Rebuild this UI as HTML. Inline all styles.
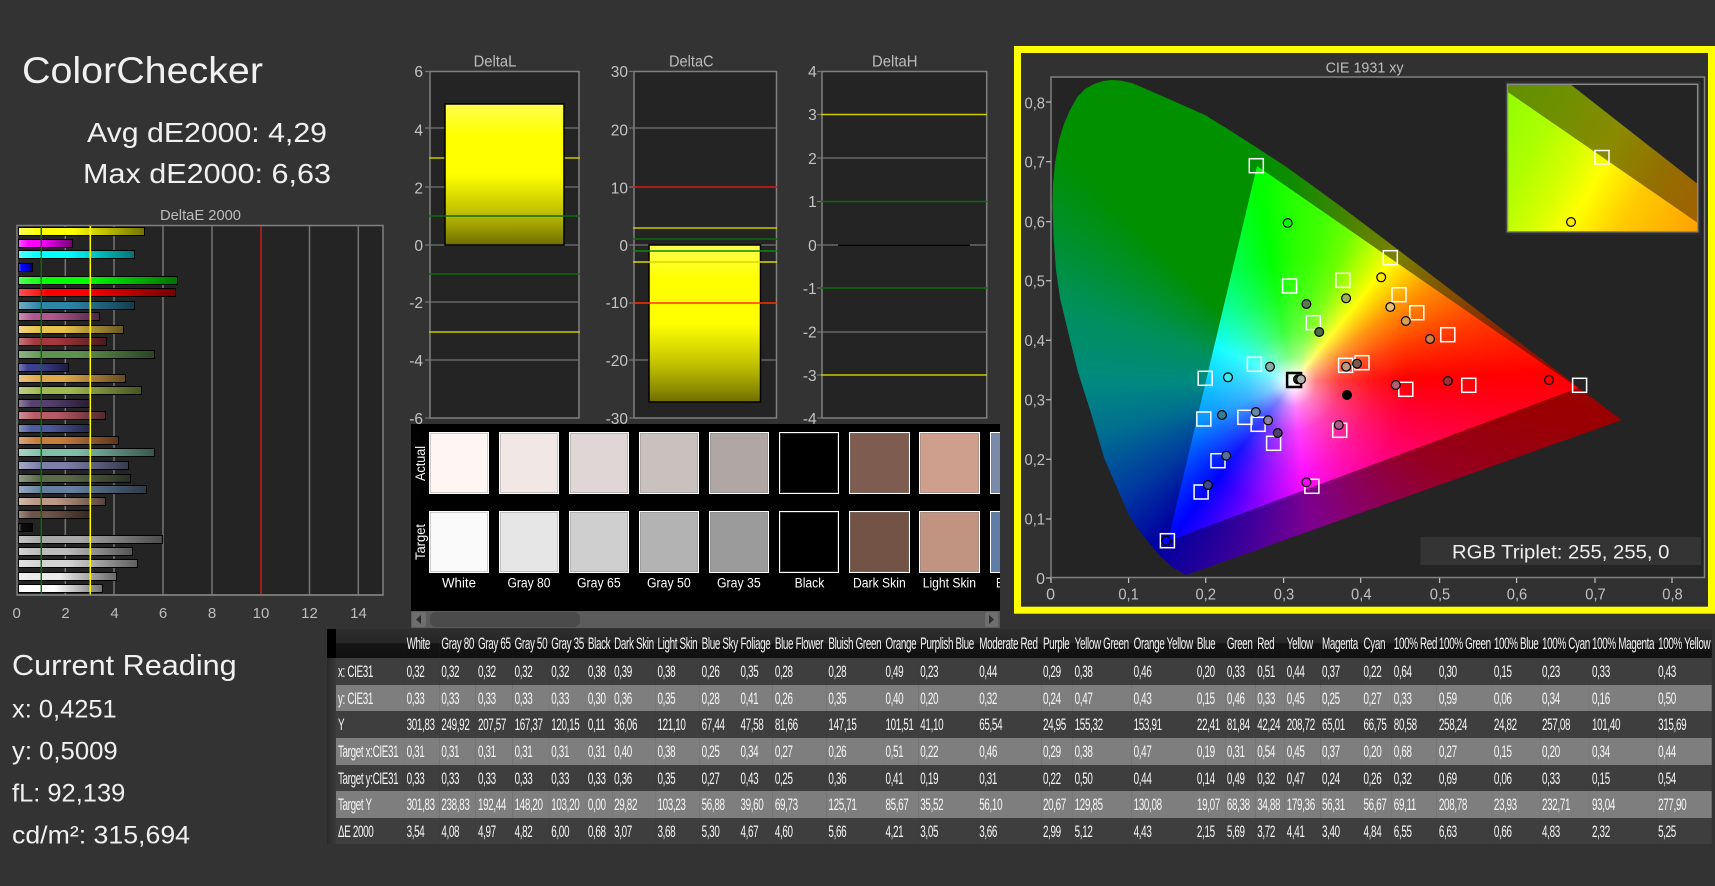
<!DOCTYPE html>
<html lang="en">
<head>
<meta charset="utf-8">
<title>ColorChecker</title>
<style>
html,body{margin:0;padding:0;background:#333;}
body{width:1715px;height:886px;overflow:hidden;position:relative;font-family:"Liberation Sans",sans-serif;}
svg.layer{position:absolute;left:0;top:0;width:1715px;height:886px;}
svg text{font-family:"Liberation Sans",sans-serif;}
.b{position:absolute;left:18px;height:9px;box-sizing:border-box;border:1px solid #000;}
.b i{display:block;width:100%;height:100%;background:linear-gradient(90deg,rgba(255,255,255,.32),rgba(255,255,255,0) 18%,rgba(0,0,0,0) 42%,rgba(0,0,0,.55));}
.full{position:absolute;left:0;top:0;width:1715px;height:886px;}
#panel{position:absolute;left:411px;top:424px;width:589px;height:187px;background:#000;overflow:hidden;}
.sw{position:absolute;width:60px;height:62px;box-sizing:border-box;border:1px solid #fff;box-shadow:inset 0 0 0 1px rgba(120,120,120,.35);}
#sb{position:absolute;left:411px;top:611px;width:589px;height:17px;background:#5c5c5c;}
#sb div{position:absolute;}
#tw{position:absolute;left:336px;top:629px;width:2372px;transform:scaleX(.58);transform-origin:0 0;}
table{border-collapse:collapse;table-layout:fixed;width:2372px;font:17px/1 "Liberation Sans",sans-serif;letter-spacing:-.6px;color:#f6f6f6;}
td{padding:0 0 0 3.4px;white-space:nowrap;vertical-align:middle;}
tr.h{height:29px;background:linear-gradient(#2e2e2e 0,#262626 48%,#151515 50%,#101010 100%);}
tr.d{background:#3e3e3e;}
tr.l{background:#7e7e7e;}
#strip{position:absolute;left:327px;top:658px;width:9px;height:186px;background:linear-gradient(90deg,#292929,#3a3a3a);}
#strip0{position:absolute;left:327px;top:629px;width:9px;height:29px;background:#000;}
</style>
</head>
<body>

<!-- LAYER 1 -->
<svg class="layer" viewBox="0 0 1715 886" xmlns="http://www.w3.org/2000/svg">
<defs>
<linearGradient id="gb" x1="0" y1="0" x2="0" y2="1">
<stop offset="0" stop-color="#ffff50"/><stop offset=".22" stop-color="#ffff00"/><stop offset=".5" stop-color="#ffff00"/><stop offset=".75" stop-color="#c4c400"/><stop offset=".92" stop-color="#8c8c00"/><stop offset="1" stop-color="#6c6c00"/>
</linearGradient>
</defs>

<!-- DeltaE plot -->
<rect x="17" y="225.5" width="366" height="369.5" fill="#242424" stroke="#808080" stroke-width="1.5"/>
<g stroke="#757575" stroke-width="1.5">
<line x1="65.3" y1="226" x2="65.3" y2="595"/>
<line x1="114" y1="226" x2="114" y2="595"/>
<line x1="163" y1="226" x2="163" y2="595"/>
<line x1="212" y1="226" x2="212" y2="595"/>
<line x1="309.5" y1="226" x2="309.5" y2="595"/>
<line x1="358.3" y1="226" x2="358.3" y2="595"/>
</g>
<line x1="261" y1="226" x2="261" y2="595" stroke="#c81c1c" stroke-width="1.5"/>

<!-- DeltaL -->
<rect x="430" y="71.5" width="149" height="346.5" fill="#242424" stroke="#808080" stroke-width="1.5"/>
<g stroke="#757575" stroke-width="1.2">
<line x1="425" y1="128" x2="579" y2="128"/><line x1="425" y1="187" x2="579" y2="187"/><line x1="425" y1="245" x2="579" y2="245"/><line x1="425" y1="302" x2="579" y2="302"/><line x1="425" y1="360" x2="579" y2="360"/>
<line x1="425" y1="71.5" x2="430" y2="71.5"/><line x1="425" y1="418" x2="430" y2="418"/>
</g>
<line x1="429" y1="158" x2="580" y2="158" stroke="#c8c800" stroke-width="1.5"/>
<line x1="429" y1="332" x2="580" y2="332" stroke="#c8c800" stroke-width="1.5"/>
<rect x="445" y="104" width="119" height="141" fill="url(#gb)" stroke="#000" stroke-width="1.5"/>
<line x1="429" y1="216" x2="580" y2="216" stroke="#0c6c0c" stroke-width="1.5"/>
<line x1="429" y1="274" x2="580" y2="274" stroke="#0c6c0c" stroke-width="1.5"/>

<!-- DeltaC -->
<rect x="634" y="71.5" width="142.5" height="346.5" fill="#242424" stroke="#808080" stroke-width="1.5"/>
<g stroke="#757575" stroke-width="1.2">
<line x1="629" y1="128" x2="776" y2="128"/><line x1="629" y1="245" x2="776" y2="245"/><line x1="629" y1="360" x2="776" y2="360"/>
<line x1="629" y1="71.5" x2="634" y2="71.5"/><line x1="629" y1="187" x2="634" y2="187"/><line x1="629" y1="303" x2="634" y2="303"/><line x1="629" y1="418" x2="634" y2="418"/>
</g>
<line x1="633" y1="187" x2="777" y2="187" stroke="#d01c1c" stroke-width="1.5"/>
<line x1="633" y1="228" x2="777" y2="228" stroke="#c8c800" stroke-width="1.5"/>
<line x1="633" y1="239" x2="777" y2="239" stroke="#0c6c0c" stroke-width="1.5"/>
<rect x="649" y="245" width="111.5" height="157" fill="url(#gb)" stroke="#000" stroke-width="1.5"/>
<line x1="633" y1="251" x2="777" y2="251" stroke="#0c8a0c" stroke-width="1.5"/>
<line x1="633" y1="262" x2="777" y2="262" stroke="#d8d800" stroke-width="1.5"/>
<line x1="633" y1="303" x2="777" y2="303" stroke="#ff3000" stroke-width="1.5"/>

<!-- DeltaH -->
<rect x="822" y="71.5" width="164.7" height="346.5" fill="#242424" stroke="#808080" stroke-width="1.5"/>
<g stroke="#757575" stroke-width="1.2">
<line x1="817" y1="158" x2="987" y2="158"/><line x1="817" y1="332" x2="987" y2="332"/>
<line x1="817" y1="245" x2="838" y2="245"/><line x1="970" y1="245" x2="987" y2="245"/>
<line x1="817" y1="71.5" x2="822" y2="71.5"/><line x1="817" y1="418" x2="822" y2="418"/>
<line x1="817" y1="114.5" x2="822" y2="114.5"/><line x1="817" y1="201.5" x2="822" y2="201.5"/><line x1="817" y1="288" x2="822" y2="288"/><line x1="817" y1="375" x2="822" y2="375"/>
</g>
<line x1="838" y1="245.3" x2="970" y2="245.3" stroke="#000" stroke-width="1.2"/>
<line x1="821" y1="114.5" x2="987" y2="114.5" stroke="#d0d000" stroke-width="1.5"/>
<line x1="821" y1="375" x2="987" y2="375" stroke="#c8c800" stroke-width="1.5"/>
<line x1="821" y1="201.5" x2="987" y2="201.5" stroke="#0c6c0c" stroke-width="1.5"/>
<line x1="821" y1="288" x2="987" y2="288" stroke="#0c6c0c" stroke-width="1.5"/>

<!-- Delta labels -->
<g font-size="15.5" fill="#bdbdbd">
<text x="473.6" y="66.5" textLength="42.8" lengthAdjust="spacingAndGlyphs">DeltaL</text>
<text x="669" y="66.5" textLength="44.6" lengthAdjust="spacingAndGlyphs">DeltaC</text>
<text x="872" y="66.5" textLength="45.5" lengthAdjust="spacingAndGlyphs">DeltaH</text>
</g>
<g font-size="15.5" fill="#c4c4c4" text-anchor="end">
<text x="423" y="77">6</text><text x="423" y="135.5">4</text><text x="423" y="193.5">2</text><text x="423" y="251">0</text><text x="423" y="308">-2</text><text x="423" y="366">-4</text><text x="423" y="424">-6</text>
<text x="628" y="77">30</text><text x="628" y="135.5">20</text><text x="628" y="193.5">10</text><text x="628" y="251">0</text><text x="628" y="308">-10</text><text x="628" y="366">-20</text><text x="628" y="424">-30</text>
<text x="816.7" y="77">4</text><text x="816.7" y="120">3</text><text x="816.7" y="164">2</text><text x="816.7" y="207">1</text><text x="816.7" y="251">0</text><text x="816.7" y="294">-1</text><text x="816.7" y="337.5">-2</text><text x="816.7" y="381">-3</text><text x="816.7" y="424">-4</text>
</g>

<!-- CIE frame and plot -->
<rect x="1017.5" y="49.5" width="694" height="560.7" fill="#313131" stroke="#ffff00" stroke-width="7"/>
<rect x="1051" y="77" width="653.5" height="500.5" fill="#242424" stroke="#808080" stroke-width="1.5"/>
<g stroke="#c4c4c4" stroke-width="1.2">
<line x1="1046" y1="102" x2="1051" y2="102"/><line x1="1046" y1="161.7" x2="1051" y2="161.7"/><line x1="1046" y1="221.7" x2="1051" y2="221.7"/><line x1="1046" y1="280.7" x2="1051" y2="280.7"/><line x1="1046" y1="340.3" x2="1051" y2="340.3"/><line x1="1046" y1="399.7" x2="1051" y2="399.7"/><line x1="1046" y1="459.3" x2="1051" y2="459.3"/><line x1="1046" y1="519" x2="1051" y2="519"/><line x1="1046" y1="578" x2="1051" y2="578"/>
<line x1="1051" y1="578" x2="1051" y2="583"/><line x1="1128.6" y1="578" x2="1128.6" y2="583"/><line x1="1205.7" y1="578" x2="1205.7" y2="583"/><line x1="1283.6" y1="578" x2="1283.6" y2="583"/><line x1="1360.7" y1="578" x2="1360.7" y2="583"/><line x1="1439.6" y1="578" x2="1439.6" y2="583"/><line x1="1516.6" y1="578" x2="1516.6" y2="583"/><line x1="1595" y1="578" x2="1595" y2="583"/><line x1="1672" y1="578" x2="1672" y2="583"/>
</g>
</svg>

<!-- LAYER 2 : DeltaE bars -->
<div class="b" style="top:227.3px;width:127.3px;background:#ffff00"><i></i></div>
<div class="b" style="top:239.3px;width:55.3px;background:#ff00ff"><i></i></div>
<div class="b" style="top:250.3px;width:117.3px;background:#00ffff"><i></i></div>
<div class="b" style="top:263.3px;width:14.7px;background:#0000ff"><i></i></div>
<div class="b" style="top:275.7px;width:160.3px;background:#00ff00"><i></i></div>
<div class="b" style="top:288.3px;width:158.3px;background:#ff0000"><i></i></div>
<div class="b" style="top:301.3px;width:117.3px;background:#2d86a8"><i></i></div>
<div class="b" style="top:312.3px;width:82.3px;background:#b0578f"><i></i></div>
<div class="b" style="top:325px;width:106.3px;background:#e8c24a"><i></i></div>
<div class="b" style="top:337.3px;width:89.3px;background:#a8383f"><i></i></div>
<div class="b" style="top:350.3px;width:136.7px;background:#5f9450"><i></i></div>
<div class="b" style="top:362.7px;width:51.3px;background:#3c3f8f"><i></i></div>
<div class="b" style="top:373.7px;width:107.7px;background:#e0a848"><i></i></div>
<div class="b" style="top:386.3px;width:124.3px;background:#a0b84e"><i></i></div>
<div class="b" style="top:399px;width:72px;background:#57406f"><i></i></div>
<div class="b" style="top:411.3px;width:87.7px;background:#b85b68"><i></i></div>
<div class="b" style="top:424.3px;width:72px;background:#4d5a9f"><i></i></div>
<div class="b" style="top:435.7px;width:101.3px;background:#c87c3a"><i></i></div>
<div class="b" style="top:448.3px;width:136.7px;background:#7fbfaa"><i></i></div>
<div class="b" style="top:460.7px;width:111.3px;background:#7f7fac"><i></i></div>
<div class="b" style="top:473.7px;width:113.3px;background:#5a6b48"><i></i></div>
<div class="b" style="top:484.7px;width:128.7px;background:#6480a0"><i></i></div>
<div class="b" style="top:497.3px;width:87.7px;background:#be9a86"><i></i></div>
<div class="b" style="top:510.3px;width:72.7px;background:#6f5448"><i></i></div>
<div class="b" style="top:522.7px;width:14.7px;background:#0c0c0c"><i></i></div>
<div class="b" style="top:535.3px;width:145.3px;background:#a8a8a8"><i></i></div>
<div class="b" style="top:546.7px;width:115.3px;background:#bcbcbc"><i></i></div>
<div class="b" style="top:559px;width:120.3px;background:#d4d4d4"><i></i></div>
<div class="b" style="top:571.7px;width:99.3px;background:#eaeaea"><i></i></div>
<div class="b" style="top:584.3px;width:85.3px;background:#ffffff"><i></i></div>

<!-- CIE locus (dim) -->
<div class="full" style="clip-path:polygon(1186.2px 575px,1172px 567px,1160px 556px,1147.4px 541px,1136.1px 526.4px,1128px 513px,1121.9px 499px,1104.3px 458.6px,1091px 413px,1078px 372px,1068.4px 333px,1060px 298px,1056px 270px,1053.8px 240px,1052.5px 207px,1053px 185px,1055px 163px,1059px 140px,1064px 124px,1070px 110px,1077.5px 96.7px,1085px 89px,1094px 84px,1103px 81px,1111px 80px,1120px 80.5px,1132px 83px,1155px 93px,1171.1px 100px,1205px 115px,1229.3px 130px,1257.4px 148px,1285.2px 166.1px,1312.9px 186px,1340.7px 206.4px,1368.4px 227.2px,1395.8px 248px,1422.8px 268.5px,1449px 288.5px,1474px 307.6px,1497.6px 325.6px,1537.9px 356.4px,1568px 379.3px,1588px 394.6px,1621.5px 420.1px);background:conic-gradient(from 0deg at 1293px 382px,#108c00 0deg,#4c8400 20deg,#7a8000 39deg,#844c00 62deg,#8c1400 82deg,#990000 95deg,#950020 120deg,#8a0060 150deg,#7c0090 174deg,#4c009a 192deg,#20009a 208deg,#0000a0 220deg,#0038a0 236deg,#006e90 255deg,#008a80 270deg,#009058 290deg,#009000 315deg,#009000 350deg,#108c00 360deg);"></div>
<!-- CIE triangle (bright) -->
<div class="full" style="clip-path:polygon(1257px 166px,1578px 388px,1168px 541px);background:radial-gradient(ellipse 115px 125px at 1293px 382px,#fff 0,rgba(255,255,255,.85) 8%,rgba(255,255,255,.5) 20%,rgba(255,255,255,.24) 40%,rgba(255,255,255,.08) 70%,rgba(255,255,255,0) 100%),conic-gradient(from 0deg at 1293px 382px,#28ff00 0deg,#40ff00 10deg,#70ff00 21deg,#ffff00 39deg,#ff9000 55deg,#ff3c00 72deg,#ff0000 88deg,#ff0040 108deg,#ff0080 130deg,#ff00b0 150deg,#ff00ff 174deg,#8000ff 198deg,#0000ff 218deg,#0090ff 247deg,#00ffff 295deg,#00ff80 323deg,#00ff00 350deg,#28ff00 360deg);"></div>

<!-- inset -->
<div style="position:absolute;left:1505px;top:81px;width:196px;height:154px;background:#2c2c2c;"></div>
<div style="position:absolute;left:1507.5px;top:84px;width:190.2px;height:147.7px;background:#242424;"></div>
<div style="position:absolute;left:1507.5px;top:84px;width:190.2px;height:147.7px;clip-path:polygon(0 0,62.5px 0,190.2px 100px,190.2px 138.7px,0 7.7px);background:linear-gradient(120deg,#5f9000 0,#709000 25%,#8a8a00 50%,#946e00 75%,#a06000 100%);"></div>
<div style="position:absolute;left:1507.5px;top:84px;width:190.2px;height:147.7px;clip-path:polygon(0 7.7px,190.2px 138.7px,190.2px 147.7px,0 147.7px);background:linear-gradient(120deg,#8cff00 0,#b0ff00 24%,#d8ff00 40%,#ffff00 52%,#ffcc00 70%,#ffa000 100%);"></div>

<!-- Swatch panel -->
<div id="panel">
<div class="sw" style="left:18.3px;top:8px;background:#fff6f3"></div>
<div class="sw" style="left:88.3px;top:8px;background:#f1e8e6"></div>
<div class="sw" style="left:158.3px;top:8px;background:#dfd6d5"></div>
<div class="sw" style="left:228.3px;top:8px;background:#c9c1be"></div>
<div class="sw" style="left:298.3px;top:8px;background:#b0a6a3"></div>
<div class="sw" style="left:368.3px;top:8px;background:#000"></div>
<div class="sw" style="left:438.3px;top:8px;width:61px;background:#7e5c50"></div>
<div class="sw" style="left:508px;top:8px;width:61px;background:#cf9f8d"></div>
<div class="sw" style="left:579px;top:8px;width:61px;background:#7a8aa8"></div>
<div class="sw" style="left:18.3px;top:87px;background:#fafafa"></div>
<div class="sw" style="left:88.3px;top:87px;background:#e6e6e6"></div>
<div class="sw" style="left:158.3px;top:87px;background:#cfcfcf"></div>
<div class="sw" style="left:228.3px;top:87px;background:#b3b3b3"></div>
<div class="sw" style="left:298.3px;top:87px;background:#9b9b9b"></div>
<div class="sw" style="left:368.3px;top:87px;background:#000"></div>
<div class="sw" style="left:438.3px;top:87px;width:61px;background:#735345"></div>
<div class="sw" style="left:508px;top:87px;width:61px;background:#c09480"></div>
<div class="sw" style="left:579px;top:87px;width:61px;background:#5f7da5"></div>
<svg style="position:absolute;left:0;top:0" width="589" height="187" viewBox="0 0 589 187" xmlns="http://www.w3.org/2000/svg">
<g font-size="13.5" fill="#fff">
<text x="31" y="163.7" textLength="34" lengthAdjust="spacingAndGlyphs">White</text>
<text x="96.5" y="163.7" textLength="43" lengthAdjust="spacingAndGlyphs">Gray 80</text>
<text x="166" y="163.7" textLength="43.7" lengthAdjust="spacingAndGlyphs">Gray 65</text>
<text x="236" y="163.7" textLength="43.7" lengthAdjust="spacingAndGlyphs">Gray 50</text>
<text x="306" y="163.7" textLength="43.7" lengthAdjust="spacingAndGlyphs">Gray 35</text>
<text x="383.6" y="163.7" textLength="29.7" lengthAdjust="spacingAndGlyphs">Black</text>
<text x="442" y="163.7" textLength="52.7" lengthAdjust="spacingAndGlyphs">Dark Skin</text>
<text x="511.7" y="163.7" textLength="53.3" lengthAdjust="spacingAndGlyphs">Light Skin</text>
<text x="585" y="163.7" textLength="45" lengthAdjust="spacingAndGlyphs">Blue Sky</text>
<text transform="translate(14,57) rotate(-90)" textLength="35" lengthAdjust="spacingAndGlyphs">Actual</text>
<text transform="translate(14,136) rotate(-90)" textLength="36" lengthAdjust="spacingAndGlyphs">Target</text>
</g>
</svg>
</div>
<div id="sb">
<div style="left:1px;top:1px;width:14px;height:15px;background:#6e6e6e;border-radius:2px;"></div>
<div style="left:19px;top:1px;width:150px;height:15px;background:#4b4b4b;border-radius:6px;"></div>
<div style="left:574px;top:1px;width:13px;height:15px;background:#6e6e6e;border-radius:2px;"></div>
<svg style="position:absolute;left:0;top:0" width="589" height="17" viewBox="0 0 589 17" xmlns="http://www.w3.org/2000/svg">
<path d="M5 8.5 L10 4 L10 13 Z" fill="#2c2c2c"/><path d="M583 8.5 L578 4 L578 13 Z" fill="#2c2c2c"/>
</svg>
</div>

<!-- Table -->
<div id="strip0"></div>
<div id="strip"></div>
<div id="tw">
<table>
<colgroup>
<col style="width:118.3px"><col style="width:60px"><col style="width:63.1px"><col style="width:63.1px"><col style="width:63.3px"><col style="width:63.1px"><col style="width:45.3px"><col style="width:74.7px"><col style="width:76.2px"><col style="width:66.9px"><col style="width:59.3px"><col style="width:92.4px"><col style="width:98.4px"><col style="width:60px"><col style="width:101.7px"><col style="width:109.8px"><col style="width:54.7px"><col style="width:101.7px"><col style="width:109.1px"><col style="width:51.6px"><col style="width:52.4px"><col style="width:50.9px"><col style="width:60.7px"><col style="width:71.7px"><col style="width:52.2px"><col style="width:77.8px"><col style="width:94.7px"><col style="width:83.1px"><col style="width:86.2px"><col style="width:114px"><col style="width:96px">
</colgroup>
<tr class="h"><td></td><td>White</td><td>Gray 80</td><td>Gray 65</td><td>Gray 50</td><td>Gray 35</td><td>Black</td><td>Dark Skin</td><td>Light Skin</td><td>Blue Sky</td><td>Foliage</td><td>Blue Flower</td><td>Bluish Green</td><td>Orange</td><td>Purplish Blue</td><td>Moderate Red</td><td>Purple</td><td>Yellow Green</td><td>Orange Yellow</td><td>Blue</td><td>Green</td><td>Red</td><td>Yellow</td><td>Magenta</td><td>Cyan</td><td>100% Red</td><td>100% Green</td><td>100% Blue</td><td>100% Cyan</td><td>100% Magenta</td><td>100% Yellow</td></tr>
<tr class="d" style="height:27px"><td>x: CIE31</td><td>0,32</td><td>0,32</td><td>0,32</td><td>0,32</td><td>0,32</td><td>0,38</td><td>0,39</td><td>0,38</td><td>0,26</td><td>0,35</td><td>0,28</td><td>0,28</td><td>0,49</td><td>0,23</td><td>0,44</td><td>0,29</td><td>0,38</td><td>0,46</td><td>0,20</td><td>0,33</td><td>0,51</td><td>0,44</td><td>0,37</td><td>0,22</td><td>0,64</td><td>0,30</td><td>0,15</td><td>0,23</td><td>0,33</td><td>0,43</td></tr>
<tr class="l" style="height:26px"><td>y: CIE31</td><td>0,33</td><td>0,33</td><td>0,33</td><td>0,33</td><td>0,33</td><td>0,30</td><td>0,36</td><td>0,35</td><td>0,28</td><td>0,41</td><td>0,26</td><td>0,35</td><td>0,40</td><td>0,20</td><td>0,32</td><td>0,24</td><td>0,47</td><td>0,43</td><td>0,15</td><td>0,46</td><td>0,33</td><td>0,45</td><td>0,25</td><td>0,27</td><td>0,33</td><td>0,59</td><td>0,06</td><td>0,34</td><td>0,16</td><td>0,50</td></tr>
<tr class="d" style="height:27px"><td>Y</td><td>301,83</td><td>249,92</td><td>207,57</td><td>167,37</td><td>120,15</td><td>0,11</td><td>36,06</td><td>121,10</td><td>67,44</td><td>47,58</td><td>81,66</td><td>147,15</td><td>101,51</td><td>41,10</td><td>65,54</td><td>24,95</td><td>155,32</td><td>153,91</td><td>22,41</td><td>81,84</td><td>42,24</td><td>208,72</td><td>65,01</td><td>66,75</td><td>80,58</td><td>258,24</td><td>24,82</td><td>257,08</td><td>101,40</td><td>315,69</td></tr>
<tr class="l" style="height:27px"><td>Target x:CIE31</td><td>0,31</td><td>0,31</td><td>0,31</td><td>0,31</td><td>0,31</td><td>0,31</td><td>0,40</td><td>0,38</td><td>0,25</td><td>0,34</td><td>0,27</td><td>0,26</td><td>0,51</td><td>0,22</td><td>0,46</td><td>0,29</td><td>0,38</td><td>0,47</td><td>0,19</td><td>0,31</td><td>0,54</td><td>0,45</td><td>0,37</td><td>0,20</td><td>0,68</td><td>0,27</td><td>0,15</td><td>0,20</td><td>0,34</td><td>0,44</td></tr>
<tr class="d" style="height:26px"><td>Target y:CIE31</td><td>0,33</td><td>0,33</td><td>0,33</td><td>0,33</td><td>0,33</td><td>0,33</td><td>0,36</td><td>0,35</td><td>0,27</td><td>0,43</td><td>0,25</td><td>0,36</td><td>0,41</td><td>0,19</td><td>0,31</td><td>0,22</td><td>0,50</td><td>0,44</td><td>0,14</td><td>0,49</td><td>0,32</td><td>0,47</td><td>0,24</td><td>0,26</td><td>0,32</td><td>0,69</td><td>0,06</td><td>0,33</td><td>0,15</td><td>0,54</td></tr>
<tr class="l" style="height:27px"><td>Target Y</td><td>301,83</td><td>238,83</td><td>192,44</td><td>148,20</td><td>103,20</td><td>0,00</td><td>29,82</td><td>103,23</td><td>56,88</td><td>39,60</td><td>69,73</td><td>125,71</td><td>85,67</td><td>35,52</td><td>56,10</td><td>20,67</td><td>129,85</td><td>130,08</td><td>19,07</td><td>68,38</td><td>34,88</td><td>179,36</td><td>56,31</td><td>56,67</td><td>69,11</td><td>208,78</td><td>23,93</td><td>232,71</td><td>93,04</td><td>277,90</td></tr>
<tr class="d" style="height:26px"><td>ΔE 2000</td><td>3,54</td><td>4,08</td><td>4,97</td><td>4,82</td><td>6,00</td><td>0,68</td><td>3,07</td><td>3,68</td><td>5,30</td><td>4,67</td><td>4,60</td><td>5,66</td><td>4,21</td><td>3,05</td><td>3,66</td><td>2,99</td><td>5,12</td><td>4,43</td><td>2,15</td><td>5,69</td><td>3,72</td><td>4,41</td><td>3,40</td><td>4,84</td><td>6,55</td><td>6,63</td><td>0,66</td><td>4,83</td><td>2,32</td><td>5,25</td></tr>
</table>
</div>

<!-- LAYER 3 -->
<svg class="layer" viewBox="0 0 1715 886" xmlns="http://www.w3.org/2000/svg">
<!-- DeltaE overlay lines -->
<line x1="41.3" y1="226" x2="41.3" y2="595" stroke="#0c6c0c" stroke-width="1.5"/>
<line x1="90.3" y1="226" x2="90.3" y2="595" stroke="#ffff00" stroke-width="1.5"/>
<line x1="17" y1="595" x2="383" y2="595" stroke="#808080" stroke-width="1.5"/>

<!-- Left text -->
<g fill="#f0f0f0">
<text x="22" y="83" font-size="37" textLength="241" lengthAdjust="spacingAndGlyphs">ColorChecker</text>
<text x="87" y="142" font-size="28" textLength="240" lengthAdjust="spacingAndGlyphs">Avg dE2000: 4,29</text>
<text x="83" y="183" font-size="28" textLength="248" lengthAdjust="spacingAndGlyphs">Max dE2000: 6,63</text>
<text x="12" y="675" font-size="29" textLength="224.7" lengthAdjust="spacingAndGlyphs">Current Reading</text>
<text x="12" y="717.7" font-size="25" textLength="104.7" lengthAdjust="spacingAndGlyphs">x: 0,4251</text>
<text x="12" y="759.3" font-size="25" textLength="105.7" lengthAdjust="spacingAndGlyphs">y: 0,5009</text>
<text x="12" y="801.3" font-size="25" textLength="113.3" lengthAdjust="spacingAndGlyphs">fL: 92,139</text>
<text x="12" y="843.7" font-size="25" textLength="178" lengthAdjust="spacingAndGlyphs">cd/m²: 315,694</text>
</g>
<text x="160" y="220" font-size="15" fill="#bdbdbd" textLength="81" lengthAdjust="spacingAndGlyphs">DeltaE 2000</text>
<g font-size="15" fill="#bdbdbd" text-anchor="middle">
<text x="16.7" y="618">0</text><text x="65.5" y="618">2</text><text x="114.5" y="618">4</text><text x="163" y="618">6</text><text x="212" y="618">8</text><text x="261" y="618">10</text><text x="309.5" y="618">12</text><text x="358.5" y="618">14</text>
</g>

<!-- CIE labels -->
<text x="1325.6" y="72.3" font-size="15" fill="#bdbdbd" textLength="78" lengthAdjust="spacingAndGlyphs">CIE 1931 xy</text>
<g font-size="16" fill="#c0c0c0" text-anchor="end">
<text x="1045" y="108.3" textLength="20.5" lengthAdjust="spacingAndGlyphs">0,8</text>
<text x="1045" y="167.7" textLength="20.5" lengthAdjust="spacingAndGlyphs">0,7</text>
<text x="1045" y="227.7" textLength="20.5" lengthAdjust="spacingAndGlyphs">0,6</text>
<text x="1045" y="286.7" textLength="20.5" lengthAdjust="spacingAndGlyphs">0,5</text>
<text x="1045" y="346" textLength="20.5" lengthAdjust="spacingAndGlyphs">0,4</text>
<text x="1045" y="405.3" textLength="20.5" lengthAdjust="spacingAndGlyphs">0,3</text>
<text x="1045" y="465" textLength="20.5" lengthAdjust="spacingAndGlyphs">0,2</text>
<text x="1045" y="524.3" textLength="20.5" lengthAdjust="spacingAndGlyphs">0,1</text>
<text x="1045" y="584">0</text>
</g>
<g font-size="16" fill="#c0c0c0" text-anchor="middle">
<text x="1050.6" y="599.3">0</text>
<text x="1128.6" y="599.3" textLength="20.5" lengthAdjust="spacingAndGlyphs">0,1</text>
<text x="1205.7" y="599.3" textLength="20.5" lengthAdjust="spacingAndGlyphs">0,2</text>
<text x="1284" y="599.3" textLength="20.5" lengthAdjust="spacingAndGlyphs">0,3</text>
<text x="1361.3" y="599.3" textLength="20.5" lengthAdjust="spacingAndGlyphs">0,4</text>
<text x="1440" y="599.3" textLength="20.5" lengthAdjust="spacingAndGlyphs">0,5</text>
<text x="1517" y="599.3" textLength="20.5" lengthAdjust="spacingAndGlyphs">0,6</text>
<text x="1595.5" y="599.3" textLength="20.5" lengthAdjust="spacingAndGlyphs">0,7</text>
<text x="1672.5" y="599.3" textLength="20.5" lengthAdjust="spacingAndGlyphs">0,8</text>
</g>

<!-- Squares -->
<g fill="none" stroke="#fff" stroke-width="1.5">
<rect x="1249.3" y="158.7" width="14" height="14"/>
<rect x="1383.3" y="250.7" width="14" height="14"/>
<rect x="1282.6" y="279" width="14" height="14"/>
<rect x="1335.9" y="273.3" width="14" height="14"/>
<rect x="1392" y="287.7" width="14" height="14"/>
<rect x="1409.8" y="305.7" width="14" height="14"/>
<rect x="1306.3" y="315.7" width="14" height="14"/>
<rect x="1440.8" y="327.7" width="14" height="14"/>
<rect x="1198.2" y="371.3" width="14" height="14"/>
<rect x="1247.4" y="357.3" width="14" height="14"/>
<rect x="1338.6" y="358.3" width="14" height="14"/>
<rect x="1355" y="355.7" width="14" height="14"/>
<rect x="1398.8" y="382.3" width="14" height="14"/>
<rect x="1461.8" y="378.3" width="14" height="14"/>
<rect x="1572.6" y="378.3" width="14" height="14"/>
<rect x="1196.8" y="412" width="14" height="14"/>
<rect x="1237.9" y="410.3" width="14" height="14"/>
<rect x="1251.1" y="417.3" width="14" height="14"/>
<rect x="1332.7" y="423.3" width="14" height="14"/>
<rect x="1266.6" y="436.3" width="14" height="14"/>
<rect x="1211" y="453.7" width="14" height="14"/>
<rect x="1194.1" y="485" width="14" height="14"/>
<rect x="1304.9" y="479.3" width="14" height="14"/>
<rect x="1160.4" y="533.7" width="14" height="14"/>
</g>
<rect x="1287.1" y="373" width="14" height="14" fill="none" stroke="#000" stroke-width="2.5"/>
<!-- Circles -->
<g stroke="#000" stroke-width="1.2">
<circle cx="1287.7" cy="223" r="4.4" fill="#00ff00"/>
<circle cx="1381.2" cy="277.3" r="4.4" fill="#ffe800"/>
<circle cx="1346.1" cy="298.3" r="4.4" fill="#a0b050"/>
<circle cx="1306.4" cy="304" r="4.4" fill="#5a7a50"/>
<circle cx="1390.3" cy="307" r="4.4" fill="#e8c070"/>
<circle cx="1405.8" cy="321" r="4.4" fill="#d8a050"/>
<circle cx="1319.2" cy="332" r="4.4" fill="#4d6a48"/>
<circle cx="1430" cy="339" r="4.4" fill="#d08040"/>
<circle cx="1270" cy="366.7" r="4.4" fill="#80b0a0"/>
<circle cx="1228" cy="377.3" r="4.4" fill="#40e8e8"/>
<circle cx="1346.1" cy="366.7" r="4.4" fill="#c09880"/>
<circle cx="1357" cy="363.7" r="4.4" fill="#7a5a50"/>
<circle cx="1395.8" cy="385" r="4.4" fill="#b06070"/>
<circle cx="1447.8" cy="381" r="4.4" fill="#a03038"/>
<circle cx="1549" cy="380" r="4.4" fill="#ff0000"/>
<circle cx="1347" cy="395" r="4.4" fill="#000"/>
<circle cx="1222" cy="415" r="4.4" fill="#308098"/>
<circle cx="1255.8" cy="412" r="4.4" fill="#6488a8"/>
<circle cx="1268.1" cy="420.3" r="4.4" fill="#9080a0"/>
<circle cx="1338.8" cy="425" r="4.4" fill="#b05890"/>
<circle cx="1277.7" cy="433" r="4.4" fill="#50406a"/>
<circle cx="1226.2" cy="455.7" r="4.4" fill="#5070a0"/>
<circle cx="1207.9" cy="485" r="4.4" fill="#3c4a90"/>
<circle cx="1306.4" cy="482.3" r="4.4" fill="#ff00ff"/>
<circle cx="1166" cy="540.7" r="4.4" fill="#0000ff"/>
<circle cx="1298" cy="379.3" r="4.4" fill="#888"/>
<circle cx="1299.5" cy="379.3" r="4.4" fill="#a0a0a0"/>
<circle cx="1301" cy="379.3" r="4.4" fill="#b0b0b0"/>
</g>

<!-- Inset markers -->
<rect x="1507.5" y="84.3" width="190.2" height="147.4" fill="none" stroke="#8a8a8a" stroke-width="1.5"/>
<rect x="1595" y="150.5" width="14" height="13.5" fill="none" stroke="#fff" stroke-width="1.5"/>
<circle cx="1571" cy="222" r="4.4" fill="#ffee00" stroke="#000" stroke-width="1.2"/>

<!-- Readout -->
<rect x="1420.4" y="537" width="280.6" height="28" fill="#343434"/>
<text x="1452" y="558.3" font-size="19.5" fill="#eeeeee" textLength="217.4" lengthAdjust="spacingAndGlyphs">RGB Triplet: 255, 255, 0</text>
</svg>

</body>
</html>
